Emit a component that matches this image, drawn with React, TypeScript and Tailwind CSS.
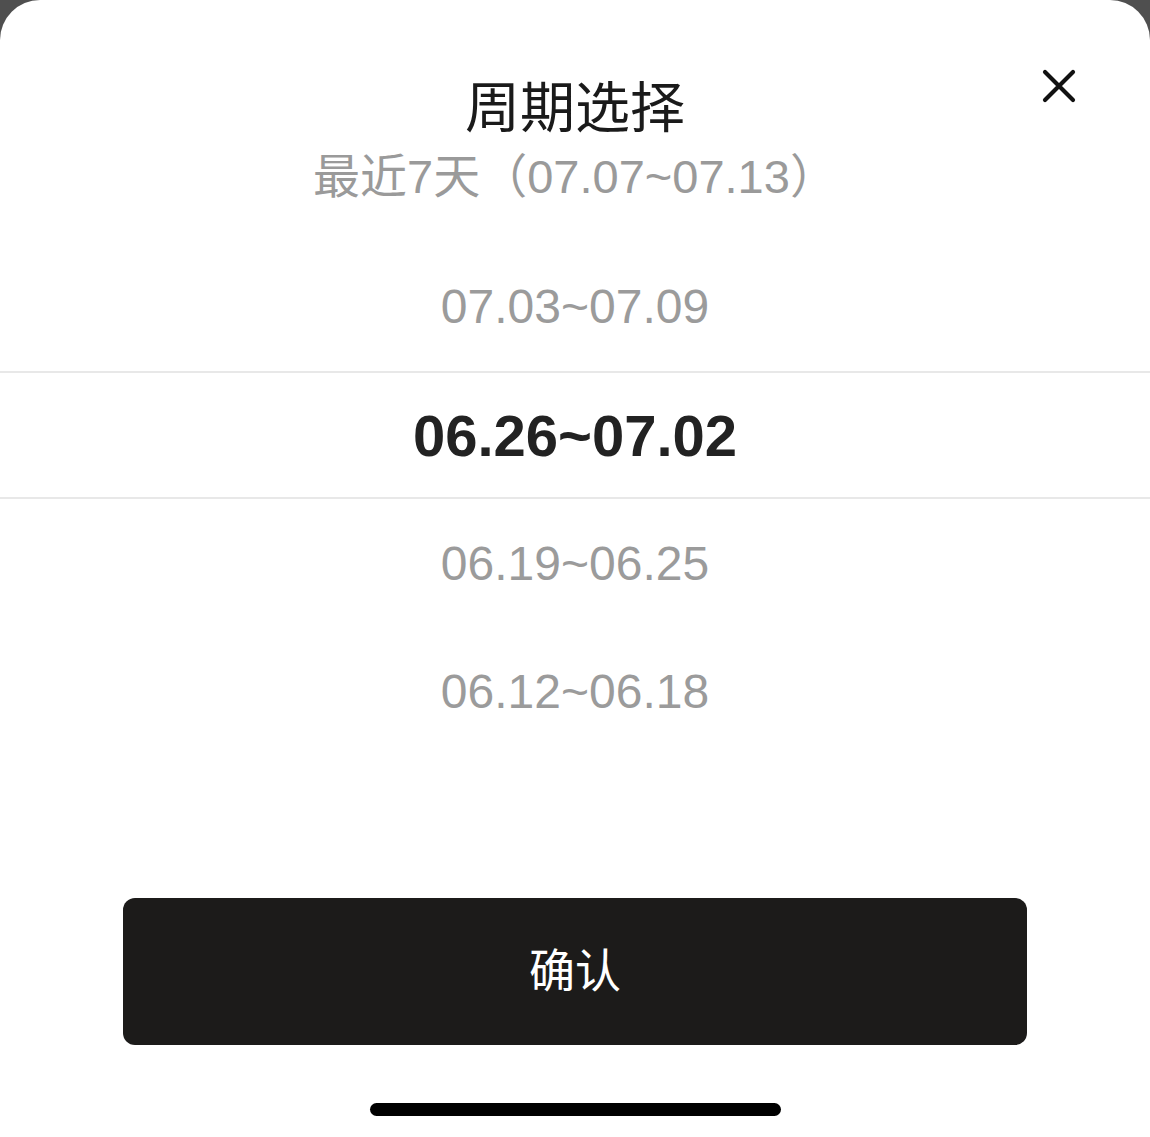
import { useState } from 'react'

const weeks = ['07.03~07.09', '06.26~07.02', '06.19~06.25', '06.12~06.18']
const heights = ['h-[128px]', 'h-[128px]', 'h-[130px]', 'h-[126px]']

export default function App() {
  const [selected] = useState(1)

  return (
    <div className="h-[1137px] w-full bg-[#4f4f4f]" style={{ fontFamily: '"Liberation Sans", "Noto Sans CJK SC", sans-serif' }}>
      <div className="relative flex h-full flex-col items-center rounded-t-[40px] bg-white">
        <button className="absolute right-[74px] top-[69px] text-[#111]" aria-label="关闭">
          <svg width="34" height="34" viewBox="0 0 34 34" fill="none">
            <path d="M3 3L31 31M31 3L3 31" stroke="currentColor" strokeWidth="4.2" strokeLinecap="round" />
          </svg>
        </button>

        <h2 className="pt-[75px] text-[55px] leading-[66px] font-normal text-[#1a1a1a]">周期选择</h2>
        <p className="mt-[10px] text-[47px] leading-[52px] text-[#9a9a9a]">最近7天（07.07~07.13）</p>

        <div className="mt-[40px] w-full">
          {weeks.map((w, i) => {
            const active = i === selected
            return (
              <div
                key={w}
                className={
                  active
                    ? `flex ${heights[i]} items-center justify-center border-y-2 border-[#e8e8e8] text-[58px] font-bold text-[#222]`
                    : `flex ${heights[i]} items-center justify-center text-[48px] text-[#9b9b9b]`
                }
              >
                {w}
              </div>
            )
          })}
        </div>

        <div className="mt-[143px] w-full px-[123px]">
          <button className="flex h-[147px] w-full items-center justify-center rounded-[12px] bg-[#1c1b1a] text-[46px] text-white">
            确认
          </button>
        </div>

        <div className="mt-[58px] h-[13px] w-[411px] rounded-full bg-black" />
      </div>
    </div>
  )
}
